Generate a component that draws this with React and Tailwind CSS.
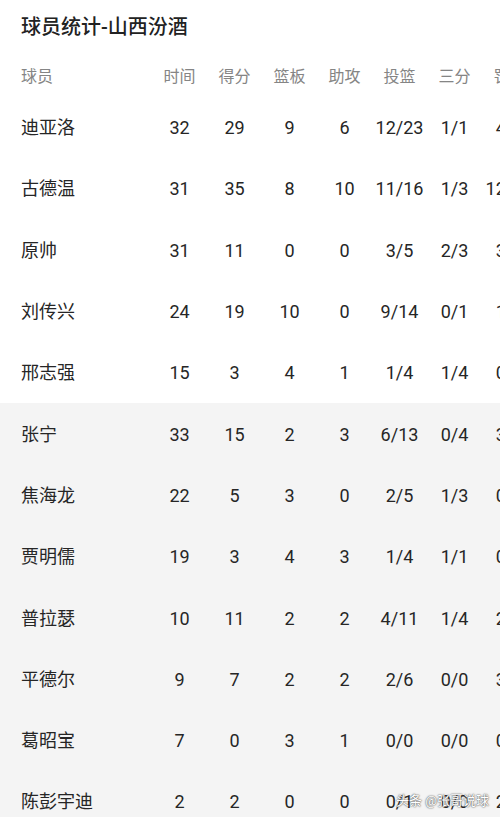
import React from 'react';

const cols = ['时间', '得分', '篮板', '助攻', '投篮', '三分', '罚球'];

const players = [
  ['迪亚洛', '32', '29', '9', '6', '12/23', '1/1', '4/4'],
  ['古德温', '31', '35', '8', '10', '11/16', '1/3', '12/13'],
  ['原帅', '31', '11', '0', '0', '3/5', '2/3', '3/4'],
  ['刘传兴', '24', '19', '10', '0', '9/14', '0/1', '1/2'],
  ['邢志强', '15', '3', '4', '1', '1/4', '1/4', '0/0'],
  ['张宁', '33', '15', '2', '3', '6/13', '0/4', '3/4'],
  ['焦海龙', '22', '5', '3', '0', '2/5', '1/3', '0/0'],
  ['贾明儒', '19', '3', '4', '3', '1/4', '1/1', '0/0'],
  ['普拉瑟', '10', '11', '2', '2', '4/11', '1/4', '2/2'],
  ['平德尔', '9', '7', '2', '2', '2/6', '0/0', '3/4'],
  ['葛昭宝', '7', '0', '3', '1', '0/0', '0/0', '0/0'],
  ['陈彭宇迪', '2', '2', '0', '0', '0/1', '0/0', '2/2'],
];

export default function App() {
  return (
    <div
      className="relative w-[500px] h-[817px] overflow-hidden bg-white"
      style={{ fontFamily: "Roboto, 'Noto Sans CJK SC', sans-serif" }}
    >
      <div className="h-[54px] pl-[21px] flex items-center text-[20px] font-medium text-[#222]">
        球员统计-山西汾酒
      </div>

      <div className="h-[43px] pt-[3px] flex items-center pl-[21px] text-[16px] text-[#858585]">
        <div className="w-[131px] shrink-0">球员</div>
        {cols.map((c) => (
          <div key={c} className="w-[55px] shrink-0 text-center">{c}</div>
        ))}
      </div>

      {players.map((p, i) => (
        <div
          key={p[0]}
          className={`h-[61.3px] flex items-center pl-[21px] text-[18px] text-[#262626] ${i >= 5 ? 'bg-[#f4f4f4]' : 'bg-white'}`}
        >
          <div className="w-[131px] shrink-0">{p[0]}</div>
          {p.slice(1).map((v, j) => (
            <div key={j} className="w-[55px] shrink-0 text-center">{v}</div>
          ))}
        </div>
      ))}

      {/* watermark */}
      <div
        className="absolute left-[396px] top-[791px] text-[13px] text-white whitespace-nowrap"
        style={{ textShadow: '0 0 1px #555, 0 0 2px #555' }}
      >
        头条 @张哥说球
      </div>
    </div>
  );
}
